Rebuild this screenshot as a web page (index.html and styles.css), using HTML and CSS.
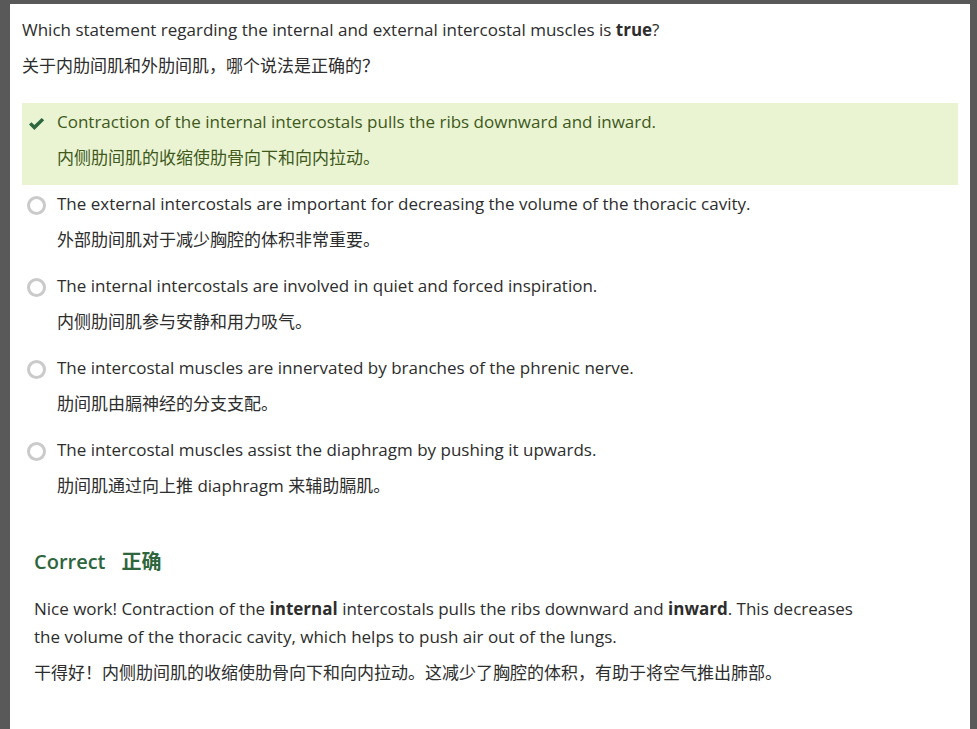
FILE: index.html
```html
<!DOCTYPE html>
<html lang="en">
<head>
<meta charset="utf-8">
<title>Intercostal muscles quiz</title>
<link rel="stylesheet" href="styles.css">
</head>
<body>
<main class="dialog">
  <form>
    <fieldset class="question">
      <legend class="prompt">
        <span class="line">Which statement regarding the internal and external intercostal muscles is <strong>true</strong>?</span>
        <span class="line" lang="zh">关于内肋间肌和外肋间肌，哪个说法是正确的？</span>
      </legend>
      <label class="choice choice-correct">
        <input class="radio" type="radio" name="answer" checked>
        <svg class="check" viewBox="0 0 20 18" aria-hidden="true"><path d="M2 9.6 L4.4 7.2 L7.4 10 L14.7 3 L17.2 5.2 L7.4 15 Z"/></svg>
        <span class="answer">
          <span class="line">Contraction of the internal intercostals pulls the ribs downward and inward.</span>
          <span class="line" lang="zh">内侧肋间肌的收缩使肋骨向下和向内拉动。</span>
        </span>
      </label>
      <label class="choice">
        <input class="radio" type="radio" name="answer">
        <span class="answer">
          <span class="line">The external intercostals are important for decreasing the volume of the thoracic cavity.</span>
          <span class="line" lang="zh">外部肋间肌对于减少胸腔的体积非常重要。</span>
        </span>
      </label>
      <label class="choice">
        <input class="radio" type="radio" name="answer">
        <span class="answer">
          <span class="line">The internal intercostals are involved in quiet and forced inspiration.</span>
          <span class="line" lang="zh">内侧肋间肌参与安静和用力吸气。</span>
        </span>
      </label>
      <label class="choice">
        <input class="radio" type="radio" name="answer">
        <span class="answer">
          <span class="line">The intercostal muscles are innervated by branches of the phrenic nerve.</span>
          <span class="line" lang="zh">肋间肌由膈神经的分支支配。</span>
        </span>
      </label>
      <label class="choice">
        <input class="radio" type="radio" name="answer">
        <span class="answer">
          <span class="line">The intercostal muscles assist the diaphragm by pushing it upwards.</span>
          <span class="line" lang="zh">肋间肌通过向上推 diaphragm 来辅助膈肌。</span>
        </span>
      </label>
    </fieldset>
  </form>
  <section class="feedback">
    <h2 class="verdict"><span>Correct</span><span lang="zh">正确</span></h2>
    <p class="note">Nice work! Contraction of the <strong>internal</strong> intercostals pulls the ribs downward and <strong>inward</strong>. This decreases the volume of the thoracic cavity, which helps to push air out of the lungs.</p>
    <p class="note" lang="zh">干得好！内侧肋间肌的收缩使肋骨向下和向内拉动。这减少了胸腔的体积，有助于将空气推出肺部。</p>
  </section>
</main>
</body>
</html>
```
FILE: styles.css
```css
* {
  box-sizing: border-box;
}

body {
  margin: 0;
  padding: 4px 7px 0 10px;
  background: #595959;
  color: #2d2d2d;
  font: 17px/28px "Open Sans", "Noto Sans CJK SC", sans-serif;
}

.dialog {
  min-height: calc(100vh - 4px);
  padding: 12px;
  background: #fff;
}

.question {
  min-width: 0;
  margin: 0;
  padding: 0;
  border: 0;
}

.prompt {
  padding: 0;
  margin-bottom: 23px;
}

.line {
  display: block;
}

.line + .line {
  margin-top: 8px;
}

.choice {
  display: flex;
  gap: 10px;
  min-height: 82px;
  padding: 5px 5px 13px;
}

.choice-correct {
  background: #eaf4d3;
  color: #40591b;
}

.radio {
  appearance: none;
  flex: none;
  width: 19px;
  height: 19px;
  margin: 6px 1px 0 0;
  border: 3px solid #cacaca;
  border-radius: 50%;
  background: #fff;
}

.choice-correct .radio {
  display: none;
}

.check {
  flex: none;
  width: 20px;
  height: 18px;
  margin-top: 7px;
  fill: #2e663e;
}

.feedback {
  max-width: 860px;
  margin-top: 35px;
  padding: 0 12px;
}

.verdict {
  display: flex;
  gap: 16px;
  margin: 0 0 19px;
  color: #2e663e;
  font-size: 20px;
  font-weight: 600;
}

.note {
  margin: 0 0 8px;
}
```
